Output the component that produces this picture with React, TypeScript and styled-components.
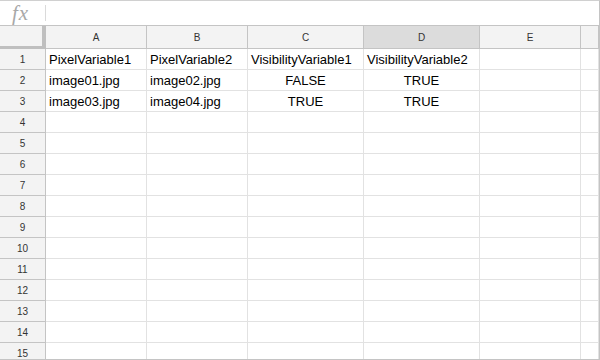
import styled, { createGlobalStyle } from 'styled-components';

const GlobalStyle = createGlobalStyle`
  * { box-sizing: border-box; }
  html, body { margin: 0; padding: 0; background: #fff; }
  body { font-family: "Liberation Sans", Arial, sans-serif; }
`

const columns = [
  { key: 'A', width: 101 },
  { key: 'B', width: 101 },
  { key: 'C', width: 116 },
  { key: 'D', width: 116, selected: true },
  { key: 'E', width: 101 },
]

const data: Record<number, { text: string; center?: boolean }[]> = {
  1: [
    { text: 'PixelVariable1' },
    { text: 'PixelVariable2' },
    { text: 'VisibilityVariable1' },
    { text: 'VisibilityVariable2' },
  ],
  2: [
    { text: 'image01.jpg' },
    { text: 'image02.jpg' },
    { text: 'FALSE', center: true },
    { text: 'TRUE', center: true },
  ],
  3: [
    { text: 'image03.jpg' },
    { text: 'image04.jpg' },
    { text: 'TRUE', center: true },
    { text: 'TRUE', center: true },
  ],
}

const rows = Array.from({ length: 15 }, (_, i) => i + 1)

const App = () => {
  return (
    <>
      <GlobalStyle />
      <Sheet>
        <FormulaBar>
          <FxLabel>fx</FxLabel>
          <FormulaInput />
        </FormulaBar>
        <Grid>
          <HeaderRow>
            <Corner />
            {columns.map(c => (
              <ColHeader key={c.key} $width={c.width} $selected={c.selected}>
                {c.key}
              </ColHeader>
            ))}
            <ColHeader $grow />
          </HeaderRow>
          {rows.map(r => (
            <Row key={r}>
              <RowHeader>{r}</RowHeader>
              {columns.map((c, i) => {
                const cell = data[r]?.[i]
                return (
                  <Cell key={c.key} $width={c.width} $center={cell?.center}>
                    {cell?.text}
                  </Cell>
                )
              })}
              <Cell $grow />
            </Row>
          ))}
        </Grid>
      </Sheet>
    </>
  )
}

export default App;

const Sheet = styled.div`
  width: 600px;
  height: 360px;
  overflow: hidden;
  border-top: 1px solid #d0d0d0;
  border-right: 1px solid #c4c4c4;
  border-bottom: 1px solid #c4c4c4;
  display: flex;
  flex-direction: column;
  background: #fff;
`
const FormulaBar = styled.div`
  height: 25px;
  flex-shrink: 0;
  display: flex;
  align-items: center;
  border-bottom: 1px solid #c4c4c4;
`
const FxLabel = styled.div`
  width: 46px;
  height: 16px;
  display: flex;
  align-items: center;
  justify-content: center;
  padding-right: 4px;
  border-right: 1px solid #dadada;
  font-family: "Liberation Serif", "Times New Roman", serif;
  font-style: italic;
  font-size: 21px;
  color: #a8a8a8;
  letter-spacing: 1px;
`
const FormulaInput = styled.div`
  flex: 1;
  height: 100%;
`
const Grid = styled.div`
  display: flex;
  flex-direction: column;
  flex: 1;
  overflow: hidden;
`
const HeaderRow = styled.div`
  display: flex;
  height: 23px;
  flex-shrink: 0;
  background: #f3f3f3;
  border-bottom: 1px solid #c4c4c4;
`
const Corner = styled.div`
  width: 46px;
  flex-shrink: 0;
  border-right: 4px solid #bfbfbf;
  border-bottom: 3px solid #bfbfbf;
  margin-bottom: -1px;
  background: #f3f3f3;
`
const ColHeader = styled.div<{ $width?: number; $selected?: boolean; $grow?: boolean }>`
  width: ${p => (p.$width ? `${p.$width}px` : 'auto')};
  flex: ${p => (p.$grow ? 1 : 'none')};
  display: flex;
  align-items: center;
  justify-content: center;
  border-right: 1px solid #c4c4c4;
  background: ${p => (p.$selected ? '#dcdcdc' : '#f3f3f3')};
  font-size: 10px;
  color: #333;
`
const Row = styled.div`
  display: flex;
  height: 21px;
  flex-shrink: 0;
`
const RowHeader = styled.div`
  width: 46px;
  flex-shrink: 0;
  display: flex;
  align-items: center;
  justify-content: center;
  background: #f3f3f3;
  border-right: 1px solid #c4c4c4;
  border-bottom: 1px solid #c4c4c4;
  font-size: 10px;
  color: #333;
`
const Cell = styled.div<{ $width?: number; $center?: boolean; $grow?: boolean }>`
  width: ${p => (p.$width ? `${p.$width}px` : 'auto')};
  flex: ${p => (p.$grow ? 1 : 'none')};
  display: flex;
  align-items: center;
  justify-content: ${p => (p.$center ? 'center' : 'flex-start')};
  padding: 1px 3px 0;
  border-right: 1px solid #e2e2e2;
  border-bottom: 1px solid #e2e2e2;
  font-size: 13px;
  color: #000;
  white-space: nowrap;
  overflow: hidden;
`
